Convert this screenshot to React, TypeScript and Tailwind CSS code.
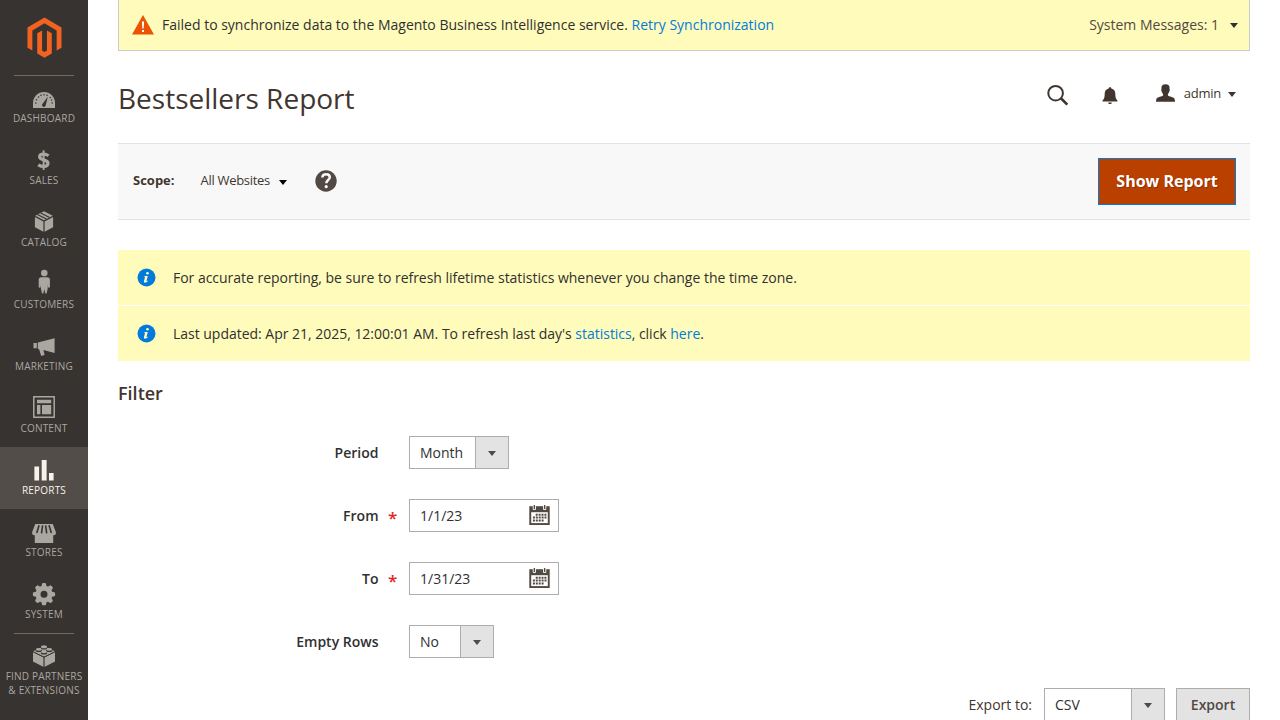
import type { ReactNode } from "react";

const gearAngles = [0, 45, 90, 135, 180, 225, 270, 315];

function Dashboard() {
  return (
    <>
      <path d="M33 33v-5.2a11 10.8 0 0 1 22 0V33z" fill="currentColor" />
      <path d="M42.3 29.2 47.9 21.6 45.6 30.6a1.8 1.8 0 1 1-3.3-1.4z" fill="#373330" />
      <g fill="#373330">
        <circle cx="35.8" cy="28" r=".8" />
        <circle cx="36.5" cy="24.8" r=".8" />
        <circle cx="38.5" cy="22" r=".8" />
        <circle cx="41" cy="20.3" r=".8" />
        <circle cx="44" cy="19.7" r=".8" />
        <circle cx="47" cy="20.3" r=".8" />
        <circle cx="50.3" cy="22.5" r=".8" />
        <circle cx="51.6" cy="25" r=".8" />
        <circle cx="52.2" cy="28" r=".8" />
      </g>
    </>
  );
}

function Sales() {
  return (
    <g fill="none" stroke="currentColor">
      <path d="M48.6 18.7c-1.6-1.1-3.3-1.6-5-1.6-2.5 0-4 1-4 2.7 0 4 8.4 2.2 8.4 6.5 0 1.9-1.6 3.1-4.3 3.1-2 0-3.9-.6-5.5-1.6" strokeWidth="3.2" />
      <path d="M43.6 13.3v19.7" strokeWidth="1.9" />
    </g>
  );
}

function Catalog() {
  return (
    <>
      <path d="M44 12.3 52.8 16.7 44 21.2 35.2 16.7zM34.9 18l8.5 4.4V32.8l-8.5-4.6zM53.1 18l-8.5 4.4V32.8l8.5-4.6z" fill="currentColor" />
      <path d="m37.4 15.4 9 4.700M40.600 13.900l9 4.600" stroke="#373330" strokeWidth="1.100" fill="none" />
    </>
  );
}

function Customers() {
  return (
    <g fill="currentColor">
      <circle cx="44.300" cy="12.100" r="3.300" />
      <path d="M41.200 16.200h6.200c1.700 0 2.500 1.100 2.500 2.700v6.800c0 1.300-1.900 1.300-1.900.2v-3l-.4 5-1 4.600h-1.300l-1-4.600-1 4.600H42l-1-4.600-.4-5v3c0 1.100-1.900 1.100-1.900-.2v-6.800c0-1.600.8-2.700 2.500-2.700z" />
    </g>
  );
}

function Marketing() {
  return (
    <path d="M33.500 20h3.300v5.200h-3.300zM37.800 19.600 54.600 15.200v14.700l-11.200-2.800 1.200 5-3.400.8-2.100-6.700-1.300-.4z" fill="currentColor" />
  );
}

function Content() {
  return (
    <>
      <path d="M33.800 11.800h20.400v20.400H33.800z" fill="none" stroke="currentColor" strokeWidth="1.500" />
      <path d="M37 14.700h14.200v3.600H37zM37 20h3.400v9.300H37zM42 20h9.200v9.300H42z" fill="currentColor" />
    </>
  );
}

function Reports() {
  return <path d="M34.400 19.600h4.700v13.900h-4.700zM41.700 13h4.900v20.500h-4.900zM49 26h4.600v7.500H49z" fill="#f7f3eb" />;
}

function Stores() {
  return (
    <>
      <path d="M34.800 24h18.400v10H34.800z" fill="currentColor" />
      <path d="M35.200 15h17.600l3.200 8.600a2.400 2.400 0 0 1-4.600 1.200 2.400 2.400 0 0 1-4.800 0 2.500 2.500 0 0 1-5.200 0 2.400 2.400 0 0 1-4.800 0 2.400 2.400 0 0 1-4.600-1.200z" fill="currentColor" />
      <path d="m39.100 16.300-2.400 7.700M42.600 16.300l-1.100 8M45.600 16.300l1.100 8M49 16.300l2.400 7.700" stroke="#373330" strokeWidth="1.600" fill="none" />
    </>
  );
}

function System() {
  return (
    <g fill="currentColor">
      <circle cx="44" cy="23.200" r="6" fill="none" stroke="currentColor" strokeWidth="5" />
      {gearAngles.map((a) => (
        <path key={a} d="M41.300 16 42 13q.2-.9 1-.9h2q.8 0 1 .9l.7 3z" transform={`rotate(${a} 44 23.200)`} />
      ))}
    </g>
  );
}

function Partners() {
  return (
    <>
      <path d="M33 18 43.700 23.500V33L33 27.500zM55 18 44.300 23.500V33L55 27.500z" fill="currentColor" />
      <path d="M44 12.500 55 17.300 44 22.700 33 17.300z" fill="currentColor" />
      <path d="m33 17.800 11 5.400 11-5.400M44 23v10" stroke="#373330" strokeWidth=".8" fill="none" />
      <g fill="#373330">
        <ellipse cx="44" cy="14" rx="3.200" ry="1.500" />
        <ellipse cx="38.800" cy="16.500" rx="3.200" ry="1.500" />
        <ellipse cx="49.200" cy="16.500" rx="3.200" ry="1.500" />
        <ellipse cx="44" cy="19.100" rx="3.200" ry="1.500" />
      </g>
      <g fill="currentColor">
        <ellipse cx="44" cy="12.700" rx="3" ry="1.500" />
        <ellipse cx="38.800" cy="15.400" rx="2.900" ry="1.300" />
        <ellipse cx="49.200" cy="15.400" rx="2.900" ry="1.300" />
        <ellipse cx="44" cy="18" rx="2.900" ry="1.300" />
      </g>
    </>
  );
}

const menu: { label: string; icon: ReactNode; active?: boolean }[] = [
  { label: "Dashboard", icon: <Dashboard /> },
  { label: "Sales", icon: <Sales /> },
  { label: "Catalog", icon: <Catalog /> },
  { label: "Customers", icon: <Customers /> },
  { label: "Marketing", icon: <Marketing /> },
  { label: "Content", icon: <Content /> },
  { label: "Reports", icon: <Reports />, active: true },
  { label: "Stores", icon: <Stores /> },
  { label: "System", icon: <System /> },
];

function Caret({ className }: { className: string }) {
  return (
    <svg className={className} width="8" height="5" viewBox="0 0 8 5" fill="currentColor">
      <path d="M0 0h8L4 5z" />
    </svg>
  );
}

function Sidebar() {
  return (
    <nav className="h-full w-[88px] shrink-0 overflow-hidden bg-[#373330] text-[#aaa6a0]">
      <div className="flex h-[75px] justify-center pl-px pt-[17px]">
        <svg width="35" height="41" viewBox="0 0 36 41" preserveAspectRatio="none" fill="#f26322">
          <path d="M18 .5 35.500 10.500v20.200l-5 2.900V13.400L18 6.200 5.500 13.400v20.200l-5-2.900V10.500z" />
          <path d="M10.500 16.300 15.500 13.400v20.100l2.500 1.500 2.500-1.500V13.400l5 2.900v20.100L18 40.700l-7.500-4.300z" />
        </svg>
      </div>
      <div className="relative">
        <div className="absolute left-[14px] top-0 h-px w-[60px] bg-[#736963]" />
        {menu.map((m) => (
          <a key={m.label} className={m.active ? "block h-[62px] bg-[#524d49] text-[#f7f3eb]" : "block h-[62px]"}>
            <svg className="block" width="88" height="36" viewBox="0 0 88 36">{m.icon}</svg>
            <span className="block text-center text-[10px] uppercase leading-[14px] tracking-[0.2px]">{m.label}</span>
          </a>
        ))}
      </div>
      <div className="mx-[14px] h-px bg-[#736963]" />
      <a className="block">
        <svg className="block" width="88" height="35" viewBox="0 0 88 35"><Partners /></svg>
        <span className="block whitespace-nowrap text-center text-[10px] uppercase leading-[14px] tracking-[0.2px]">
          Find Partners
          <br />
          &amp; Extensions
        </span>
      </a>
    </nav>
  );
}

function InfoIcon() {
  return (
    <svg className="ml-[19px] mr-[17px] shrink-0" width="19" height="19" viewBox="0 0 19 19">
      <circle cx="9.500" cy="9.500" r="9" fill="#007bdb" />
      <circle cx="10.500" cy="5.200" r="1.300" fill="#fffbbb" />
      <path d="M7.300 7.900h3.500l-1.300 4.900c-.1.500.3.500 1.200-.2l.3.400c-1.100 1.300-2 1.700-2.900 1.700-1 0-1.400-.6-1.100-1.600l1.100-4.300H7.200z" fill="#fffbbb" />
    </svg>
  );
}

function CalendarIcon() {
  return (
    <svg width="21" height="20" viewBox="0 0 21 20">
      <path d="M.3 1.200h20.400V20H.3z" fill="#514943" />
      <path d="M2.200 7.200h16.600v10.900H2.200z" fill="#fff" />
      <path d="M4.200-.5h2.300v5H4.200zM14.500-.5h2.300v5h-2.300z" fill="#514943" stroke="#fff" strokeWidth=".9" />
      <g stroke="#514943" strokeWidth="2" strokeDasharray="2 .9">
        <path d="M6.700 9.700h11.100M3.900 12.600h13.900M3.900 15.500h11" />
      </g>
    </svg>
  );
}

function Select({ value, width }: { value: string; width: string }) {
  return (
    <div className={`${width} flex h-[33px] border border-[#adadad] bg-white text-[#303030]`}>
      <span className="flex-1 pl-[10px] leading-[32px] tracking-[-0.05px]">{value}</span>
      <span className="flex w-[33px] items-center justify-center border-l border-[#adadad] bg-[#e3e3e3] text-[#514943]">
        <Caret className="mt-[2px]" />
      </span>
    </div>
  );
}

function Field({ label, required, children }: { label: string; required?: boolean; children: ReactNode }) {
  return (
    <div className="mb-[30px] flex h-[33px]">
      <div className="w-[260.5px] text-right font-semibold leading-[34px] text-[#303030]">{label}</div>
      <div className="w-[30.5px] pl-[9.5px] text-[17px] font-semibold leading-[38px] text-[#e22626]">{required ? "*" : ""}</div>
      {children}
    </div>
  );
}

function DateInput({ value }: { value: string }) {
  return (
    <div className="flex h-[33px] w-[150px] justify-between border border-[#adadad] bg-white pl-[10px] pr-[8.5px] pt-[5px]">
      <span className="leading-[22px] text-[#303030]">{value}</span>
      <CalendarIcon />
    </div>
  );
}

export default function App() {
  return (
    <div className="flex h-[720px] w-[1280px] overflow-hidden bg-white font-['Open_Sans',sans-serif] text-[14px] text-[#41362f]">
      <Sidebar />
      <main className="ml-[30px] w-[1132px] shrink-0">
        <div className="flex h-[51px] items-center border-x border-b border-[#cccccc] bg-[#fffbbb]">
          <svg className="-mt-px ml-[13px] mr-[8px]" width="22" height="20" viewBox="0 0 22 20">
            <path d="M11 0 22 19.500H0z" fill="#eb5202" />
            <path d="M9.900 6.500h2.200l-.4 7h-1.400zM10 15h2v2.100h-2z" fill="#fff" />
          </svg>
          <span className="pb-[2px] text-[#303030]">
            Failed to synchronize data to the Magento Business Intelligence service.{" "}
            <a className="text-[#007bdb]">Retry Synchronization</a>
          </span>
          <span className="ml-auto pb-[2px] text-[#514943]">System Messages: 1</span>
          <Caret className="ml-[11px] mr-[11px] text-[#303030]" />
        </div>

        <header className="flex h-[92px]">
          <h1 className="pt-[28px] text-[28px] leading-[38px]">Bestsellers Report</h1>
          <div className="ml-auto flex pr-[14px] pt-[32px]">
            <svg className="mt-px" width="22" height="22" viewBox="0 0 22 22" fill="none" stroke="#41362f">
              <circle cx="8.600" cy="9.200" r="7.300" strokeWidth="2" />
              <path d="m13.900 14.300 6.400 6.300" strokeWidth="2.700" />
            </svg>
            <svg className="ml-[33px] mt-[4px]" width="16" height="18" viewBox="0 0 16 18" fill="#41362f">
              <path d="M8 .3c.8 0 1.300.4 1.300 1.200 2.600.6 4 2.500 4 5 0 3.500.4 5.300 2.200 7.100v.8H.5v-.8C2.300 11.800 2.700 10 2.700 6.500c0-2.500 1.400-4.400 4-5C6.700.7 7.200.3 8 .3zM6.100 15.400h3.800C9.800 16.500 9 17 8 17s-1.800-.5-1.900-1.600z" />
            </svg>
            <svg className="ml-[38px] mt-[1px]" width="19" height="18" viewBox="0 0 19 18" fill="#41362f">
              <path d="M9.500.3c2.800 0 4.200 1.500 4.100 4l-.1 1.200c.6.200.3 1.800-.3 2.100-.3 1.300-.7 1.900-1.300 2.600v1.300c.9 1 5.700 1.600 6.500 2.900.4.800.6 2 .6 3.300H0c0-1.300.2-2.500.6-3.300.8-1.300 5.600-1.900 6.500-2.900v-1.300C6.500 9.500 6.100 8.900 5.800 7.600c-.6-.3-.9-1.900-.3-2.100l-.1-1.200C5.300 1.800 6.700.3 9.500.3z" />
            </svg>
            <span className="ml-[9px] text-[13px] leading-[20px] tracking-[-0.25px]">admin</span>
            <Caret className="ml-[7px] mt-[9px]" />
          </div>
        </header>

        <section className="flex h-[77px] items-center border-y border-[#e3e3e3] bg-[#f8f8f8] text-[13px]">
          <span className="ml-[15px] pb-[3px] font-bold leading-[20px]">Scope:</span>
          <span className="ml-[26px] pb-[2px] tracking-[-0.3px]">All Websites</span>
          <Caret className="ml-[9px] mt-[2px] text-black" />
          <svg className="-mt-[2px] ml-[28px]" width="22" height="22" viewBox="0 0 22 22">
            <circle cx="11" cy="11" r="10.700" fill="#514943" />
            <path d="M7.300 7.500c.2-2.100 1.700-3.200 3.800-3.200 2.200 0 3.700 1.200 3.700 3 0 2.700-3.500 2.700-3.500 5.900" fill="none" stroke="#f8f8f8" strokeWidth="2.500" />
            <circle cx="11.200" cy="16.700" r="1.600" fill="#f8f8f8" />
          </svg>
          <button className="ml-auto mr-[14px] h-[47px] w-[138px] border border-[#007bdb] bg-[#ba4000] pb-[2px] text-[16px] font-bold text-white [text-shadow:1px_1px_0_rgba(0,0,0,0.25)]">
            Show Report
          </button>
        </section>

        <div className="mt-[30px] tracking-[-0.02px] text-[#303030]">
          <div className="mb-px flex h-[55px] items-center bg-[#fffbbb]">
            <InfoIcon />
            <span>For accurate reporting, be sure to refresh lifetime statistics whenever you change the time zone.</span>
          </div>
          <div className="flex h-[55px] items-center bg-[#fffbbb]">
            <InfoIcon />
            <span>
              Last updated: Apr 21, 2025, 12:00:01 AM. To refresh last day's <a className="text-[#007bdb]">statistics</a>, click{" "}
              <a className="text-[#007bdb]">here</a>.
            </span>
          </div>
        </div>

        <h2 className="mt-[20px] h-[55px] text-[18px] font-semibold leading-[24px]">Filter</h2>
        <Field label="Period"><Select value="Month" width="w-[100px]" /></Field>
        <Field label="From" required><DateInput value="1/1/23" /></Field>
        <Field label="To" required><DateInput value="1/31/23" /></Field>
        <Field label="Empty Rows"><Select value="No" width="w-[85px]" /></Field>

        <div className="flex justify-end leading-[34px]">
          <span className="mr-[12px]">Export to:</span>
          <Select value="CSV" width="w-[121px]" />
          <button className="ml-[11px] h-[33px] w-[74px] border border-[#adadad] bg-[#e3e3e3] font-semibold leading-[32px] text-[#514943]">Export</button>
        </div>
      </main>
    </div>
  );
}
